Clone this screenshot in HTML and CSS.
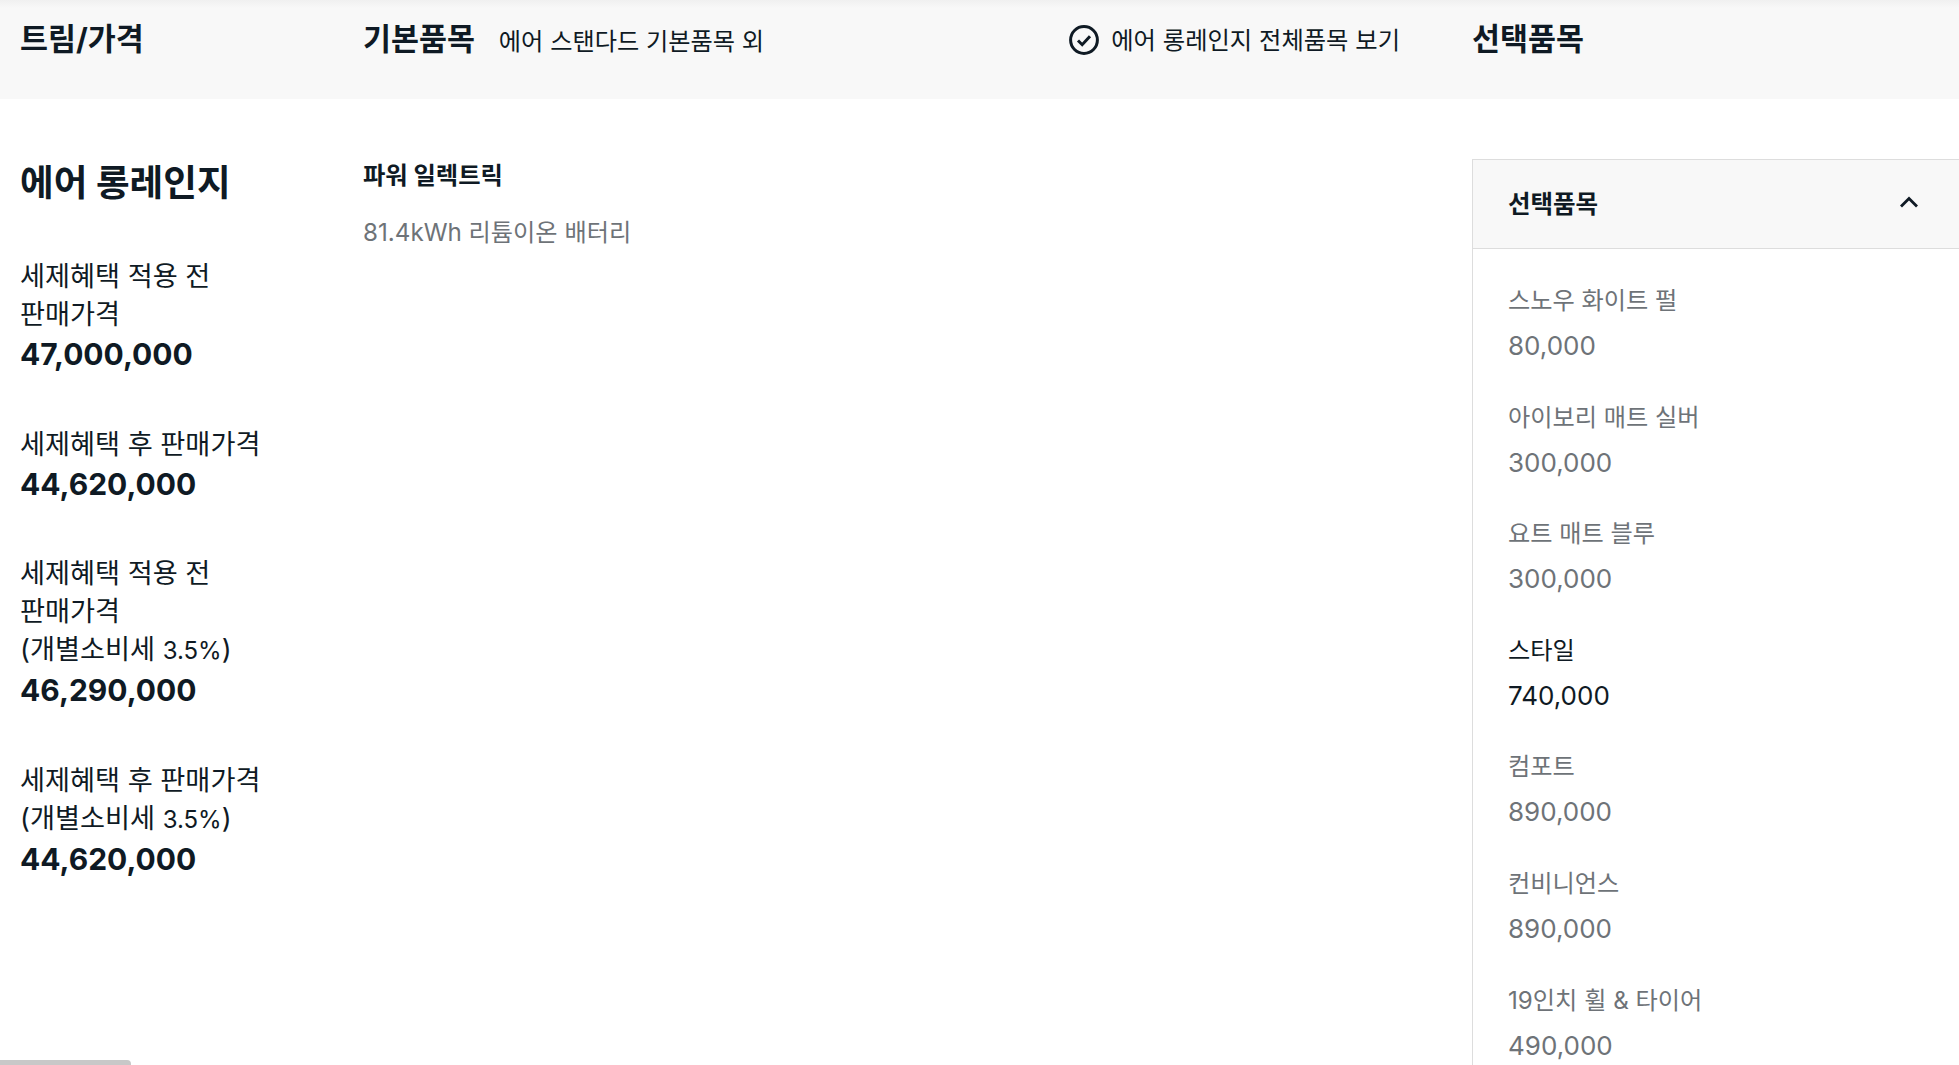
FILE: index.html
```html
<!DOCTYPE html>
<html lang="ko">
    <head>
        <meta charset="UTF-8" />
        <title>트림/가격</title>
        <link rel="stylesheet" href="styles.css">
    </head>
    <body>
        <header class="top-bar">
            <div class="col-trim"><h2 class="bar-title">트림/가격</h2></div>
            <div class="col-basic bar-basic">
                <div class="bar-left">
                    <h2 class="bar-title">기본품목</h2>
                    <span class="bar-sub">에어 스탠다드 기본품목 외</span>
                </div>
                <div class="bar-check">
                    <svg class="check-icon" viewBox="0 0 30 30" width="30" height="30">
                        <circle cx="15" cy="15" r="13.4" fill="none" stroke="#0f1a24" stroke-width="3" />
                        <path d="M9 15.5l4.2 4.2 7.8-8.4" fill="none" stroke="#0f1a24" stroke-width="3" />
                    </svg>
                    <span>에어 롱레인지 전체품목 보기</span>
                </div>
            </div>
            <div class="col-option"><h2 class="bar-title">선택품목</h2></div>
        </header>
        <main class="content">
            <section class="col-trim">
                <h1 class="trim-name">에어 롱레인지</h1>
                <div class="price-box">
                    <div class="price-label">세제혜택 적용 전<br>판매가격</div>
                    <div class="price-value">47,000,000</div>
                </div>
                <div class="price-box">
                    <div class="price-label">세제혜택 후 판매가격</div>
                    <div class="price-value">44,620,000</div>
                </div>
                <div class="price-box">
                    <div class="price-label">세제혜택 적용 전<br>판매가격<br>(개별소비세 <span class="pct">3.5%</span>)</div>
                    <div class="price-value">46,290,000</div>
                </div>
                <div class="price-box">
                    <div class="price-label">세제혜택 후 판매가격<br>(개별소비세 <span class="pct">3.5%</span>)</div>
                    <div class="price-value">44,620,000</div>
                </div>
            </section>
            <section class="col-basic">
                <h3 class="basic-group">파워 일렉트릭</h3>
                <div class="basic-item">81.4kWh 리튬이온 배터리</div>
            </section>
            <aside class="col-option option-panel">
                <div class="option-head">
                    <span>선택품목</span>
                    <svg viewBox="0 0 20 12" width="20" height="12">
                        <path d="M2 10.5l8-8 8 8" fill="none" stroke="#0f1a24" stroke-width="2.8" />
                    </svg>
                </div>
                <ul class="option-list">
                    <li><div class="option-name">스노우 화이트 펄</div><div class="option-price">80,000</div></li>
                    <li><div class="option-name">아이보리 매트 실버</div><div class="option-price">300,000</div></li>
                    <li><div class="option-name">요트 매트 블루</div><div class="option-price">300,000</div></li>
                    <li class="on"><div class="option-name">스타일</div><div class="option-price">740,000</div></li>
                    <li><div class="option-name">컴포트</div><div class="option-price">890,000</div></li>
                    <li><div class="option-name">컨비니언스</div><div class="option-price">890,000</div></li>
                    <li><div class="option-name">19인치 휠 &amp; 타이어</div><div class="option-price">490,000</div></li>
                </ul>
            </aside>
        </main>
        <div class="scroll-thumb"></div>
    </body>
</html>
```

FILE: styles.css
```css
* {
    box-sizing: border-box;
}
html, body {
    height: 100%;
    overflow: hidden;
}
body {
    margin: 0;
    background-color: #ffffff;
    font-family: Inter, "Noto Sans CJK KR", sans-serif;
    color: #0f1a24;
}
h1, h2, h3, ul {
    margin: 0;
    padding: 0;
}
.col-trim {
    width: 363px;
    flex: none;
    padding-left: 20px;
}
.col-basic {
    width: 1109px;
    flex: none;
}
.col-option {
    flex: 1;
}
.top-bar {
    display: flex;
    height: 99px;
    padding-top: 19px;
    background: linear-gradient(#f0f0f0, #f8f8f8 8px);
}
.bar-title {
    font-size: 30.4px;
    line-height: 40px;
    font-weight: 700;
}
.bar-basic {
    display: flex;
    justify-content: space-between;
    padding-right: 72px;
}
.bar-left {
    display: flex;
    align-items: center;
    height: 40px;
    column-gap: 24px;
}
.bar-sub {
    font-size: 24.2px;
}
.bar-check {
    display: flex;
    align-items: center;
    height: 42px;
    column-gap: 12px;
    font-size: 24.3px;
}
.bar-check span {
    padding-bottom: 4px;
}
.check-icon {
    display: block;
}
.content {
    display: flex;
    padding-top: 60px;
}
.trim-name {
    font-size: 36.6px;
    line-height: 46px;
    font-weight: 700;
    margin-top: 1px;
    margin-bottom: 52px;
}
.price-box {
    margin-bottom: 49.5px;
}
.price-label {
    font-size: 27.2px;
    line-height: 38px;
}
.pct {
    font-size: 24px;
}
.price-value {
    margin-top: -2px;
    font-size: 30px;
    line-height: 44px;
    font-weight: 700;
}
.basic-group {
    font-size: 24.3px;
    line-height: 32px;
    font-weight: 700;
}
.basic-item {
    margin-top: 26px;
    font-size: 24.2px;
    line-height: 32px;
    color: #6e7378;
}
.option-panel {
    height: 1000px;
    border-left: 1px solid #dddddd;
}
.option-head {
    display: flex;
    justify-content: space-between;
    align-items: center;
    height: 90px;
    padding: 0 40px 4px 35px;
    background-color: #f8f8f8;
    border-top: 1px solid #dddddd;
    border-bottom: 1px solid #dddddd;
    font-size: 24.5px;
    font-weight: 700;
}
.option-list {
    list-style: none;
    padding: 29px 35px 0;
    color: #6e7378;
}
.option-list li {
    height: 116.6px;
}
.option-name {
    font-size: 24.2px;
    line-height: 46px;
}
.option-price {
    font-size: 26px;
    line-height: 44px;
}
.option-list li.on {
    color: #0f1a24;
}
.scroll-thumb {
    position: absolute;
    left: 0;
    bottom: 0;
    width: 131px;
    height: 5px;
    background-color: #c8c8c8;
    border-top-right-radius: 4px;
}
```
